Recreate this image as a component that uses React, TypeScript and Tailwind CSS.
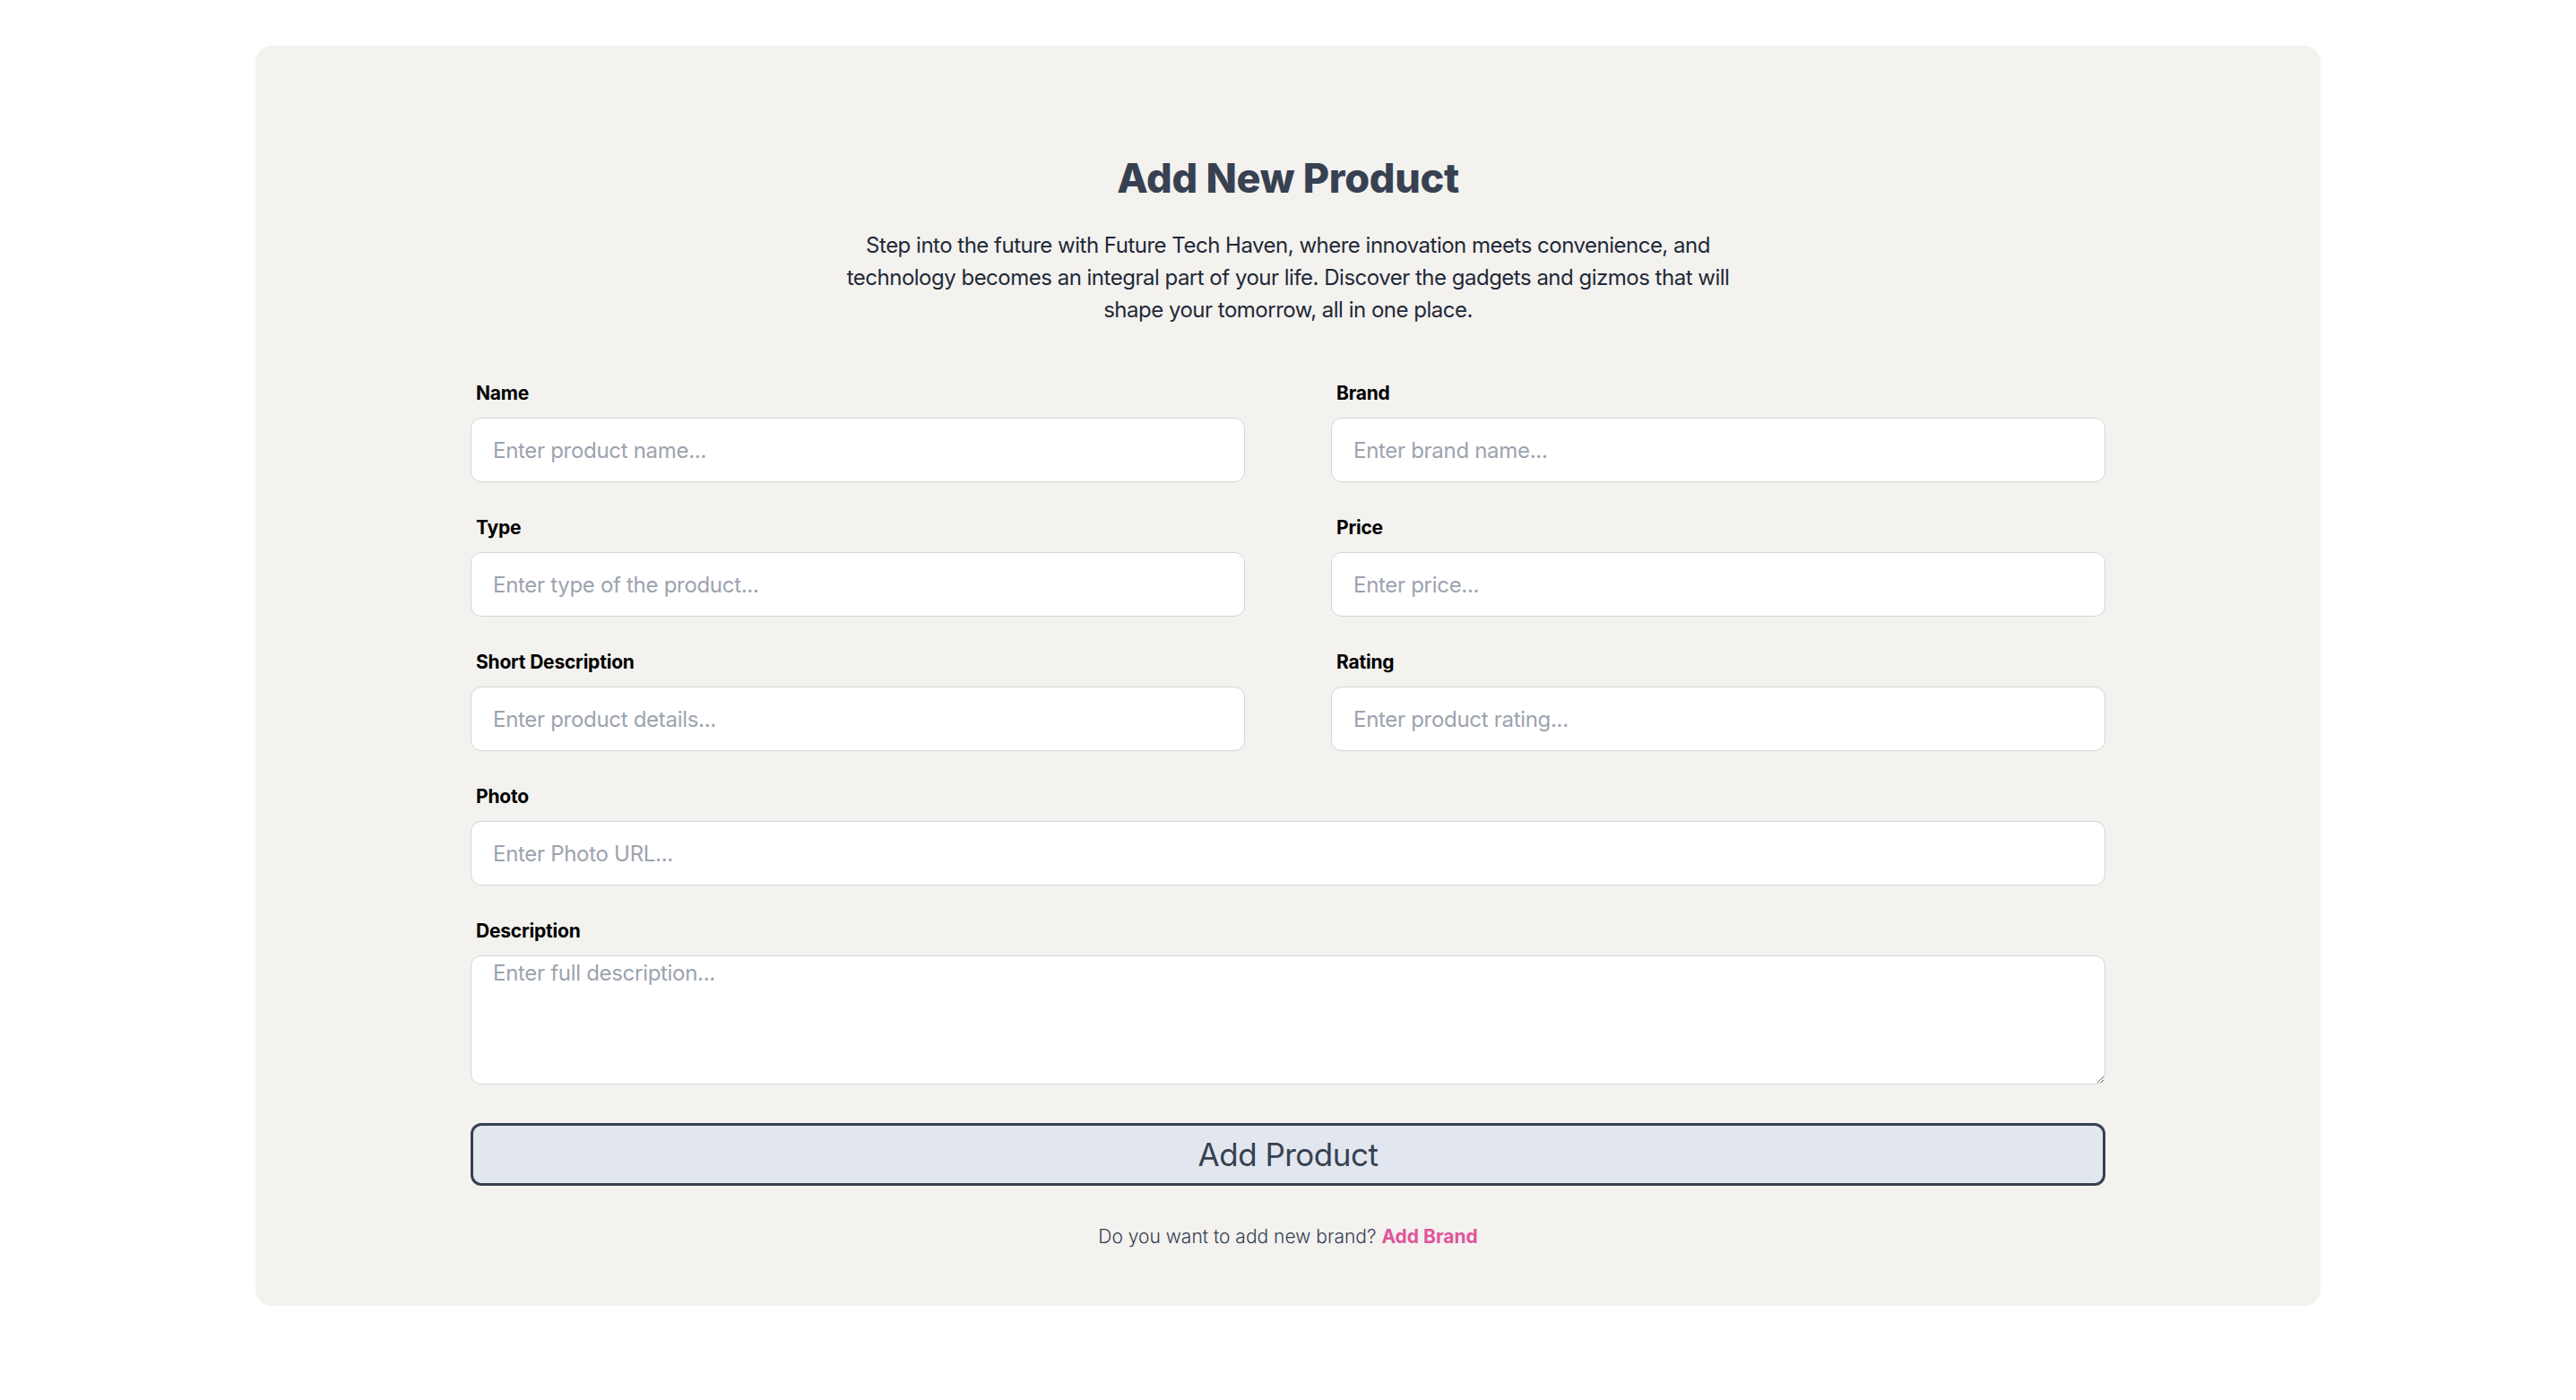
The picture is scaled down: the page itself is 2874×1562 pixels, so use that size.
import React from 'react';

const fields = [
    { label: 'Name', placeholder: 'Enter product name...' },
    { label: 'Brand', placeholder: 'Enter brand name...' },
    { label: 'Type', placeholder: 'Enter type of the product...' },
    { label: 'Price', placeholder: 'Enter price...' },
    { label: 'Short Description', placeholder: 'Enter product details...' },
    { label: 'Rating', placeholder: 'Enter product rating...' },
];

const Label: React.FC<{ text: string }> = ({ text }) => (
    <label className="block px-[6px] py-[12px] text-[21px] leading-[30px] font-bold text-black tracking-[-0.2px]">{text}</label>
);

const inputClass =
    'block w-full h-[72px] rounded-[12px] border border-[#d4d5d9] bg-white px-[24px] text-[24px] tracking-[-0.3px] text-gray-800 placeholder:text-[#9ca3af] outline-none';

const App: React.FC = () => {
    return (
        <div className="min-h-screen bg-white pt-[51px] font-['Inter',sans-serif]">
            <div className="mx-auto w-[2304px] rounded-[18px] bg-[#f3f2ef] px-[240px] pt-[121px] pb-[62px]">
                <h1 className="text-center text-[45px] leading-[54px] font-extrabold tracking-[-0.3px] text-[#374151]">Add New Product</h1>
                <p className="mx-auto mt-[30px] w-[1010px] text-center text-[24px] leading-[36px] tracking-[-0.5px] text-[#1f2937]">
                    Step into the future with Future Tech Haven, where innovation meets convenience, and technology becomes an integral part of your life. Discover the gadgets and gizmos that will shape your tomorrow, all in one place.
                </p>

                <form className="mt-[48px]" onSubmit={e => e.preventDefault()}>
                    <div className="grid grid-cols-2 gap-x-[96px] gap-y-[24px]">
                        {fields.map(f => (
                            <div key={f.label}>
                                <Label text={f.label} />
                                <input type="text" placeholder={f.placeholder} className={inputClass} />
                            </div>
                        ))}
                        <div className="col-span-2">
                            <Label text="Photo" />
                            <input type="text" placeholder="Enter Photo URL..." className={inputClass} />
                        </div>
                        <div className="col-span-2">
                            <Label text="Description" />
                            <textarea
                                placeholder="Enter full description..."
                                className="block w-full h-[144px] rounded-[12px] border border-[#d4d5d9] bg-white px-[24px] pt-[1px] text-[24px] leading-[36px] tracking-[-0.3px] text-gray-800 placeholder:text-[#9ca3af] outline-none"
                            />
                        </div>
                    </div>

                    <button
                        type="submit"
                        className="mt-[43px] block w-full h-[70px] rounded-[12px] border-[3px] border-[#374151] bg-[#e2e7ef] text-[35px] tracking-[-0.5px] text-[#374151]"
                    >
                        Add Product
                    </button>
                </form>

                <p className="mt-[42px] text-center text-[21px] leading-[30px] font-light text-[#374151]">
                    Do you want to add new brand?{' '}
                    <a href="#" className="font-bold text-[#e0559b]">Add Brand</a>
                </p>
            </div>
        </div>
    );
};

export default App;
